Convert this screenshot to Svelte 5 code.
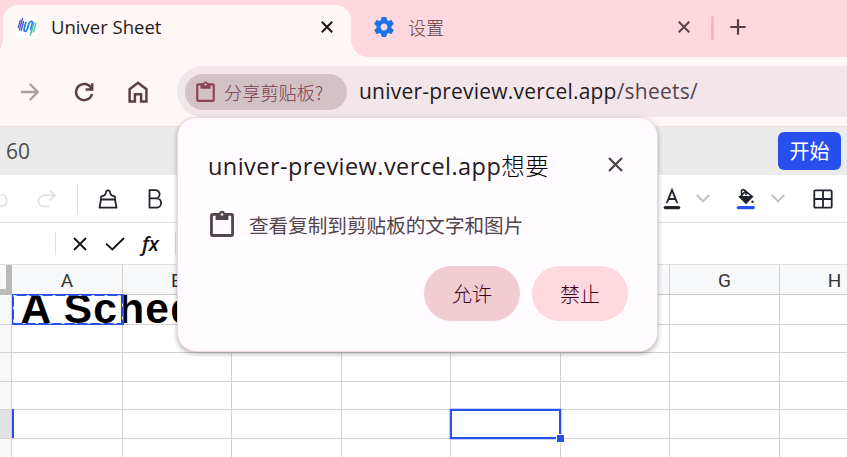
<script>
  const columns = ['A', 'B', 'C', 'D', 'E', 'F', 'G', 'H'];
  const rowIds = [1, 2, 3, 4, 5, 6];
</script>

{#snippet clipboard()}
  <svg class="clip" viewBox="0 0 23.2 26">
    <rect x="1.4" y="4.2" width="20.4" height="20.4" rx="1.2" fill="none" stroke="currentColor" stroke-width="2.7" />
    <path d="M5.4 3h3.2a3.1 3.1 0 0 1 6 0h3.2v6.5H5.4z" fill="currentColor" />
    <circle cx="11.6" cy="4.3" r="1.3" fill="#f4e9ee" />
  </svg>
{/snippet}

{#snippet cross(size, width)}
  <svg width={size} height={size} viewBox="0 0 12 12" fill="none" stroke="currentColor" stroke-width={width}>
    <path d="M.8 .8l10.4 10.4M11.2 .8L.8 11.2" />
  </svg>
{/snippet}

<div class="window">
  <header class="tabs">
    <div class="tab active">
      <span class="favicon">
        <svg width="20" height="20" viewBox="0 0 20 20" fill="none" stroke-width="1.3" stroke-linecap="round">
          <path d="M3.3 3.5 1.2 10.5M5.5 1.5 2.4 13" stroke="#5b4fc9" />
          <path d="M6.6 4.500 4.200 13.500" stroke="#3f55d8" />
          <path d="M8.800 5.500 7.200 11.500q-.7 2.800 1 2.800 1.500 0 2.300-2.800L12 6.500q.9-2.600 2.500-2.200 1.300.5.500 3.200L13.600 12.500" stroke="#1d7fe6" stroke-width="1.700" />
          <path d="M17 5.500 14.200 16M18.900 6.500l-2.400 8.500M14.600 13.500l-1.200 4.500" stroke="#46bda8" />
        </svg>
      </span>
      <span class="tab-title">Univer Sheet</span>
      <span class="tab-close">{@render cross(12, 2.1)}</span>
    </div>
    <div class="tab second">
      <svg class="gear" width="24" height="24" viewBox="0 0 24 24" fill="#1a73e8">
        <path d="M19.43 12.98c.04-.32.07-.64.07-.98s-.03-.66-.07-.98l2.11-1.65c.19-.15.24-.42.12-.64l-2-3.46c-.12-.22-.39-.3-.61-.22l-2.49 1c-.52-.4-1.08-.73-1.69-.98l-.38-2.65C14.46 2.18 14.25 2 14 2h-4c-.25 0-.46.18-.49.42l-.38 2.65c-.61.25-1.17.59-1.69.98l-2.49-1c-.23-.09-.49 0-.61.22l-2 3.46c-.13.22-.07.49.12.64l2.11 1.65c-.04.32-.07.65-.07.98s.03.66.07.98l-2.11 1.65c-.19.15-.24.42-.12.64l2 3.46c.12.22.39.3.61.22l2.49-1c.52.4 1.08.73 1.69.98l.38 2.65c.03.24.24.42.49.42h4c.25 0 .46-.18.49-.42l.38-2.65c.61-.25 1.17-.59 1.69-.98l2.49 1c.23.09.49 0 .61-.22l2-3.46c.12-.22.07-.49-.12-.64l-2.11-1.65zM12 15.5c-1.93 0-3.5-1.57-3.5-3.5s1.57-3.5 3.5-3.5 3.5 1.57 3.5 3.5-1.57 3.5-3.5 3.5z" />
      </svg>
      <span class="tab-title cjk">设置</span>
      <span class="tab-close">{@render cross(12, 2)}</span>
    </div>
    <span class="tab-divider"></span>
    <svg class="plus" width="16" height="16" viewBox="0 0 16 16" stroke="#5a3f45" stroke-width="2.2"><path d="M8 .3v15.4M.3 8h15.4" /></svg>
  </header>

  <nav class="navbar">
    <svg width="20" height="20" viewBox="0 0 20 20" fill="none" stroke="#aaa0a0" stroke-width="2.4"><path d="M1 10h16.5M9.8 2l8 8-8 8" /></svg>
    <svg width="20" height="20" viewBox="0 0 20 20" fill="none" stroke="#5a3f45" stroke-width="2.5"><path d="M17.2 6A8.1 8.1 0 1 0 18 12M18.2 1.2v6.4h-6.600" /></svg>
    <svg width="20" height="22" viewBox="0 0 20 22" fill="none" stroke="#5a3f45" stroke-width="2.5"><path d="M1.600 8.200 10 1.800l8.400 6.400v12.200h-5.300v-7.200H6.900v7.200H1.600z" /></svg>
    <div class="omnibox">
      <div class="chip">{@render clipboard()}<span>分享剪贴板?</span></div>
      <span class="url">univer-preview.vercel.app<i>/sheets/</i></span>
    </div>
  </nav>

  <div class="appbar">
    <span class="num">60</span>
    <button class="start">开始</button>
  </div>

  <div class="toolbar">
    <div class="left">
      <svg class="undo" width="8" height="20" viewBox="0 0 8 20" fill="none" stroke="#dedfe1" stroke-width="1.5"><path d="M0 5.8h1.2a5.7 5.7 0 0 1 0 11.4H0" /></svg>
      <svg class="redo" width="20" height="20" viewBox="0 0 20 20" fill="none" stroke="#dedfe1" stroke-width="1.5"><path d="M12.4 1.2 18 6.3l-5.6 5.2M17.8 6.3H7a5.6 5.6 0 0 0 0 11.3h5.6" /></svg>
      <span class="sep"></span>
      <svg class="brush" width="20" height="20" viewBox="0 0 20 20" fill="none" stroke="#20242c" stroke-width="1.8" stroke-linejoin="round"><path d="M3 10.500V8.200q0-1 1-1.100C7 6.700 7.800 5.400 8 3 8.200.7 11.800.7 12 3c.2 2.400 1 3.700 4 4.100q1 .1 1 1.100v2.300M3 10.500h14l1.500 8.100H1.500z" /></svg>
      <svg class="bold" width="14" height="20" viewBox="0 0 14 20" fill="none" stroke="#20242c" stroke-width="1.8" stroke-linejoin="round"><path d="M1.500 1.200h6a4 4 0 0 1 0 8.200h-6zM1.500 9.400h7a4.500 4.500 0 0 1 0 9.200h-7z" /></svg>
    </div>
    <div class="right">
      <svg width="18" height="22" viewBox="0 0 18 22" fill="none" stroke="#20242c" stroke-width="1.900"><path d="M3.800 15 9 2l5.200 13M5.500 11h7" /><path d="M2.300 19.600h13.400" stroke-width="3.200" stroke-linecap="round" /></svg>
      <svg class="chev" width="14" height="9" viewBox="0 0 14 9" fill="none" stroke="#c1c2c5" stroke-width="2"><path d="M.8 1 7 7.300 13.200 1" /></svg>
      <svg class="bucket" width="20" height="22" viewBox="0 0 20 22" fill="none" stroke="#20242c" stroke-width="1.600"><path d="m9.500 3.200 6.500 5.200-6 6-6-5.200zM5.500 6.800V2.500q2-2 4.500.7v4" /><path d="M4 8.800h12L10 15z" fill="#20242c" /><circle cx="16.500" cy="13.800" r="1.200" fill="#20242c" stroke="none" /><path d="M2.300 19.600h15" stroke="#274fee" stroke-width="3.200" stroke-linecap="round" /></svg>
      <svg class="chev" width="14" height="9" viewBox="0 0 14 9" fill="none" stroke="#c1c2c5" stroke-width="2"><path d="M.8 1 7 7.300 13.200 1" /></svg>
      <svg class="borders" width="20" height="20" viewBox="0 0 20 20" fill="none" stroke="#20242c" stroke-width="1.800"><rect x="1.300" y="1.300" width="17.400" height="17.400" rx="1" /><path d="M10 1v18M1 10h18" /></svg>
    </div>
  </div>

  <div class="formula">
    <span class="sep"></span>
    <svg class="cancel" width="14" height="14" viewBox="0 0 14 14" stroke="#111" stroke-width="1.800"><path d="m1 1 12 12M13 1 1 13" /></svg>
    <svg class="ok" width="20" height="14" viewBox="0 0 20 14" fill="none" stroke="#111" stroke-width="1.800"><path d="m1 6.600 6.300 5.900L19 1" /></svg>
    <span class="fx">fx</span>
    <span class="sep"></span>
  </div>

  <div class="sheet">
    <div class="row head">
      <div class="rowhead corner"></div>
      {#each columns as name}
        <div class="cell">{name}</div>
      {/each}
    </div>
    {#each rowIds as id}
      <div class="row r{id}">
        <div class="rowhead"></div>
        {#each columns as name}
          <div class="cell">
            {#if id === 1 && name === 'A'}
              <div class="heading">A Schedule</div>
              <svg class="ants" width="112" height="31" viewBox="0 0 112 31" fill="none"><path d="M1 1h110v29H1z" stroke="#274fee" stroke-width="2" /><path d="M1.500 1.500h109v28h-109z" stroke="#dce3ff" stroke-width="1" stroke-dasharray="3 10" /></svg>
            {/if}
            {#if id === 5 && name === 'E'}<div class="selection"><b></b></div>{/if}
          </div>
        {/each}
      </div>
    {/each}
  </div>

  <section class="prompt">
    <div class="prompt-head">
      <h1>univer-preview.vercel.app<span>想要</span></h1>
      {@render cross(15, 1.8)}
    </div>
    <div class="permission">{@render clipboard()}<span>查看复制到剪贴板的文字和图片</span></div>
    <div class="actions">
      <button class="allow">允许</button>
      <button>禁止</button>
    </div>
  </section>
</div>

<style>
  :global(body) { margin: 0; overflow: hidden; }
  .window { position: relative; width: 847px; height: 457px; overflow: hidden; background: #fff; font-family: "Open Sans", "Noto Sans CJK SC", sans-serif; color: #1f1a1c; }
  .window, .window * { box-sizing: border-box; }
  svg { display: block; flex: none; }
  button { border: 0; padding: 0; font: 20px/1 "Noto Sans CJK SC", sans-serif; }
  .tabs { height: 57px; background: #ffd7de; display: flex; }
  .tab { display: flex; align-items: center; height: 44px; margin-top: 5px; }
  .tab.active { position: relative; width: 348px; height: 52px; margin-left: 3px; padding: 0 18px 8px 13px; border-radius: 15px 15px 0 0; background: #fff7f5; }
  .tab.active::before, .tab.active::after { content: ""; position: absolute; bottom: 0; width: 17px; height: 17px; }
  .tab.active::before { left: -17px; background: radial-gradient(circle at 0 0, transparent 16.500px, #fff7f5 17px); }
  .tab.active::after { right: -17px; background: radial-gradient(circle at 100% 0, transparent 16.500px, #fff7f5 17px); }
  .favicon { width: 22px; height: 22px; padding: 1px; background: #fff; border-radius: 2px; }
  .tab-title { flex: 1; font-size: 18.500px; line-height: 24px; margin-left: 13px; white-space: nowrap; }
  .tab-close { color: #1f1a1c; }
  .second { width: 339px; padding-left: 21px; }
  .second .tab-title { font: 300 18px/24px "Noto Sans CJK SC", sans-serif; color: #5a3f45; margin-left: 12px; margin-top: -1px; }
  .second .tab-close { color: #5a3f45; }
  .tab-divider { width: 3px; height: 24px; margin: 16px 16px 0 21px; background: #ffb1c0; border-radius: 2px; }
  .plus { margin-top: 19px; }
  .navbar { height: 70px; background: #fff7f5; border-bottom: 1px solid #f2dcdf; display: flex; align-items: center; gap: 34px; padding: 0 0 0 20px; }
  .omnibox { flex: 1; height: 51px; margin: 0 0 0 -5px; padding-left: 8px; border-radius: 26px 0 0 26px; background: #f2e6ea; display: flex; align-items: center; }
  .chip { width: 162px; height: 36px; border-radius: 18px; background: #d2c2c6; display: flex; align-items: center; padding-left: 11px; gap: 9px; color: #8c4358; font: 300 18.200px/24px "Noto Sans CJK SC", sans-serif; }
  .chip span { white-space: nowrap; padding-top: 1px; color: #7d3a4e; }
  .clip { width: 19px; height: 21px; }
  .url { margin: -1px 0 0 12px; font-size: 21px; letter-spacing: .22px; line-height: 28px; white-space: nowrap; }
  .url i { font-style: normal; color: #51444a; }
  .appbar { height: 48px; background: #ebebeb; display: flex; align-items: center; justify-content: space-between; padding: 0 6px; }
  .num { font-size: 21px; color: #4b4b4b; }
  .start { width: 63px; height: 38px; background: #274fee; color: #fff; border-radius: 6px; }
  .toolbar { height: 48px; border-bottom: 1px solid #e0e0e1; display: flex; align-items: center; justify-content: space-between; padding-right: 15px; }
  .left, .right { display: flex; align-items: center; }
  .redo { margin-left: 29px; }
  .sep { width: 1px; height: 30px; background: #e0e0e1; margin-left: 20px; flex: none; }
  .brush { margin-left: 20px; }
  .bold { margin-left: 30px; }
  .chev { margin-left: 15px; }
  .borders { margin-left: 28px; margin-right: -1px; }
  .chev + .bucket { margin-left: 26px; }
  .formula { height: 42px; border-bottom: 1px solid #e0e0e1; display: flex; align-items: center; }
  .formula .sep { height: 23px; margin-left: 55px; }
  .cancel { margin-left: 17px; }
  .ok { margin-left: 18px; }
  .fx { margin-left: 17px; width: 20px; font: italic 600 20px/22px "Open Sans", sans-serif; color: #111; }
  .formula .fx + .sep { margin-left: 13px; }
  .row { display: grid; grid-template-columns: 12px 111px 109px 110px 109px 110px 109px 110px 110px; height: 29px; }
  .row.head { height: 30px; background: #f7f8fa; }
  .row.r1 { height: 30px; }
  .row.r2, .row.r4 { height: 28px; }
  .cell, .rowhead { border-right: 1px solid #d2d2d2; border-bottom: 1px solid #d2d2d2; }
  .rowhead { background: #f7f8fa; }
  .corner { border-right: 6px solid #b9b9b9; border-bottom: 6px solid #b9b9b9; }
  .head .cell { display: flex; justify-content: center; align-items: center; padding: 2px 0 0 0; font: 19px/22px "Roboto", sans-serif; color: #333; border-bottom: 1px solid #c9c9cb; }
  .r5 .rowhead { background: #e0e2e4; position: relative; }
  .r5 .rowhead::after { content: ""; position: absolute; left: 12px; top: -1px; width: 2px; height: 29px; background: #274fee; }
  .r1 .cell, .r5 .cell { position: relative; }
  .heading { position: absolute; z-index: 1; left: 8.500px; top: 0; width: 300px; height: 29px; overflow: hidden; white-space: nowrap; font: bold 42.500px/28px "Liberation Sans", sans-serif; letter-spacing: 1.200px; color: #000; }
  .ants { position: absolute; z-index: 2; left: 0; top: -1px; }
  .selection { position: absolute; z-index: 1; left: -1px; top: -1px; width: 111px; height: 30px; border: 2px solid #274fee; box-shadow: 0 0 0 .5px #8ea2f5; }
  .selection b { position: absolute; right: -6px; bottom: -6px; width: 9px; height: 9px; border: 1px solid #fff; background: #274fee; }
  .prompt { position: absolute; z-index: 5; left: 177px; top: 117px; width: 481px; height: 235px; padding: 32px 29px 0 30px; border: 1px solid #ecd8dd; border-radius: 19px; background: #fffbff; box-shadow: 0 2px 5px rgba(0, 0, 0, .3); }
  .prompt-head { display: flex; justify-content: space-between; align-items: center; height: 30px; padding-right: 5px; color: #51444a; }
  .prompt-head :global(svg) { margin-top: -2px; }
  h1 { margin: 0; font-size: 23.500px; letter-spacing: .44px; font-weight: 400; line-height: 30px; white-space: nowrap; color: #1f1a1c; }
  h1 span { font-family: "Noto Sans CJK SC", sans-serif; font-weight: 300; color: #000; }
  .permission { display: flex; align-items: center; height: 30px; margin-top: 29px; padding-left: 2px; gap: 15px; color: #51444a; font: 400 19.600px/30px "Noto Sans CJK SC", sans-serif; }
  .permission span { padding-top: 2px; }
  .permission .clip { width: 24px; height: 27px; margin-top: -1px; }
  .actions { display: flex; justify-content: flex-end; gap: 12px; margin-top: 27px; }
  .actions button { width: 96px; height: 55px; border-radius: 28px; background: #ffd9df; color: #3f0018; font-weight: 300; }
  .actions .allow { background: #f2ccd3; }
</style>
